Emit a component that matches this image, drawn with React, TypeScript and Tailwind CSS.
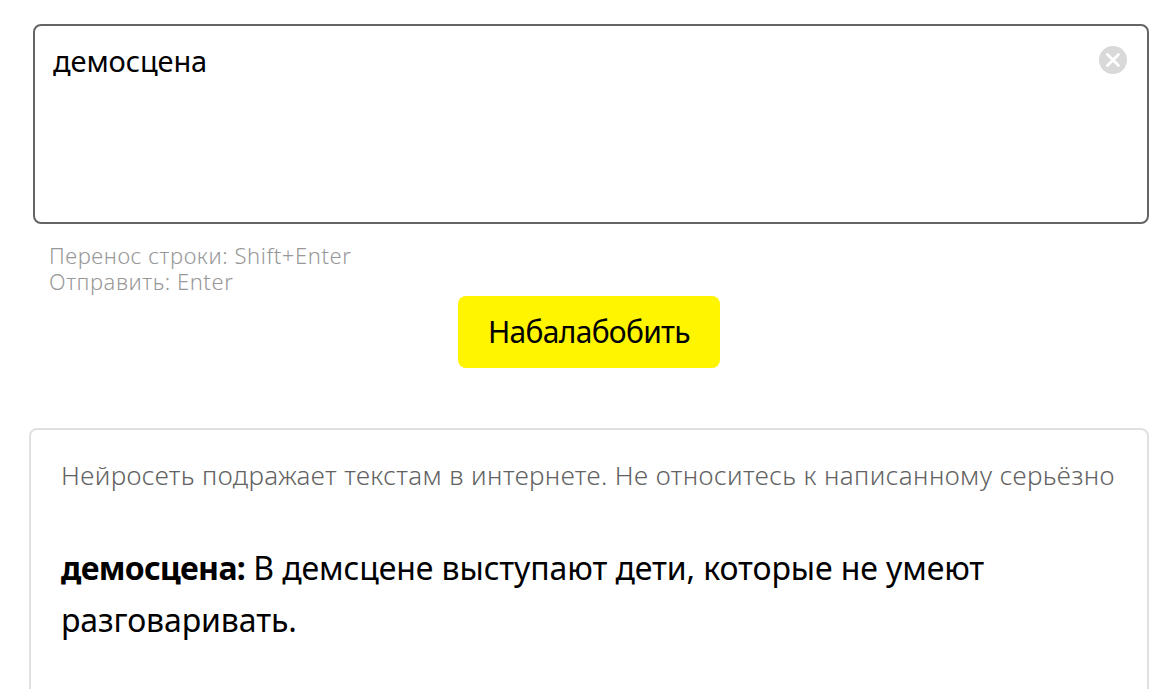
import React, { useState } from 'react';

const App: React.FC = () => {
  const [query, setQuery] = useState('демосцена');

  return (
    <main className="h-[689px] overflow-hidden bg-white pt-6 pl-[29px] pr-[21px] font-['Noto_Sans','Open_Sans',sans-serif] text-black">
      <form className="flex flex-col" onSubmit={(e) => e.preventDefault()}>
        <div className="ml-1 flex h-[200px] items-start rounded-lg border-2 border-[#666464] pt-5 pr-5 pl-[18px]">
          <textarea
            value={query}
            onChange={(e) => setQuery(e.target.value)}
            className="-mt-[3px] h-[160px] flex-1 resize-none text-[29px] leading-9 tracking-[-0.1px] outline-none"
          />
          <button type="button" aria-label="Очистить" onClick={() => setQuery('')}>
            <svg width="28" height="28" viewBox="0 0 28 28" fill="none">
              <circle cx="14" cy="14" r="14" fill="#d9d9d9" />
              <path d="M8.5 8.5l11 11M19.5 8.5l-11 11" stroke="white" strokeWidth="2.8" strokeLinecap="round" />
            </svg>
          </button>
        </div>

        <p className="mt-[18px] mb-[2px] ml-5 h-[52px] text-[22px] leading-[26px] font-light tracking-[0.58px] text-[#989898]">
          Перенос строки: Shift+Enter
          <br />
          Отправить: Enter
        </p>

        <button
          type="submit"
          className="ml-[429px] h-[72px] w-[262px] rounded-lg bg-[#fff500] pb-px text-[30px] tracking-[-0.7px]"
        >
          Набалабобить
        </button>
      </form>

      <section className="mt-[60px] h-[320px] rounded-lg border-2 border-[#e0e0e0] px-[30px] pt-[27px]">
        <p className="text-[26px] leading-9 font-light tracking-[0.4px] whitespace-nowrap text-[#626262]">
          Нейросеть подражает текстам в интернете. Не относитесь к написанному серьёзно
        </p>
        <p className="mt-[49px] text-[32px] leading-[52px] tracking-[-0.1px] whitespace-nowrap">
          <b className="tracking-[-0.7px]">демосцена:</b> В демсцене выступают дети, которые не умеют
          <br />
          разговаривать.
        </p>
      </section>
    </main>
  );
};

export default App;
